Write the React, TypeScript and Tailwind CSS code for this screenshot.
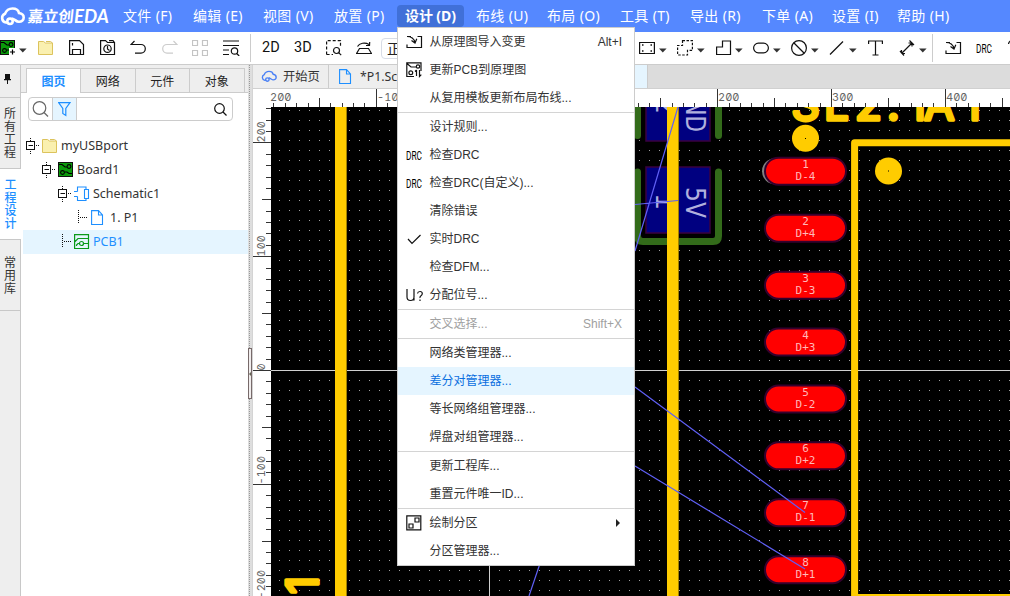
import React from "react";

const UI = "font-['Noto_Sans','Noto_Sans_CJK_SC',sans-serif]";
const MENU = "font-['Liberation_Sans','Noto_Sans_CJK_SC',sans-serif]";

const K = { fill: "none", stroke: "#111", strokeWidth: 1.2 } as const;

function Icon({ w = 16, h = 16, children, className = "" }: { w?: number; h?: number; children: React.ReactNode; className?: string }) {
  return (
    <svg width={w} height={h} viewBox={`0 0 ${w} ${h}`} className={`block shrink-0 ${className}`} {...K}>
      {children}
    </svg>
  );
}

function Caret() {
  return (
    <svg width="8" height="5" viewBox="0 0 8 5" className="mt-1 block shrink-0">
      <path d="M0 0.5h7.6L3.8 4.6z" fill="#333" />
    </svg>
  );
}

function DrcIcon() {
  return (
    <svg width="18" height="12" viewBox="0 0 18 12" className="block shrink-0">
      <text x="0" y="10.500" fontFamily="Roboto" fontSize="12" textLength="16" lengthAdjust="spacingAndGlyphs" fill="#000">DRC</text>
    </svg>
  );
}

const ImportIcon = () => (
  <Icon w={17} h={16}>
    <path d="M5 2.500H1M11.500 2.500H15.500V13.500H1V10.500M1 2.500C5 2.500 8 4.500 9 8.500M5.500 6.500L9 9l1.800-4.200" />
  </Icon>
);

const FolderIcon = ({ className = "" }: { className?: string }) => (
  <svg width="16" height="16" viewBox="0 0 16 16" className={`block shrink-0 ${className}`}>
    <path d="M0.500 1.500H5.500L7.500 3H14.500V14.500H0.500z" fill="#faf0b0" stroke="#dcc35c" />
    <path d="M8 1.500h4.500l2 1.500" fill="none" stroke="#dcc35c" />
  </svg>
);

const BoardIcon = ({ plus = false }: { plus?: boolean }) => (
  <svg width="16" height="16" viewBox="0 0 16 16" className="block shrink-0">
    <rect x="0.500" y="0.500" width="14" height="14" fill="#0a9a0a" stroke="#111" />
    <g fill="none" stroke="#000" strokeWidth="1.100">
      <path d="M1 2.500h3l3 2.500h2M14 11.500h-3l-2-1.500H6.500" />
      <circle cx="11" cy="4.500" r="1.900" />
      <circle cx="4.500" cy="10.500" r="1.900" />
    </g>
    {plus && <path d="M9 8h7v8H9z" fill="#fff" />}
    {plus && <path d="M12.500 9.500v5M10 12h5" stroke="#000" strokeWidth="1.200" />}
  </svg>
);

const PageIcon = ({ className = "" }: { className?: string }) => (
  <svg width="13" height="16" viewBox="0 0 13 16" className={`block shrink-0 ${className}`} fill="none" stroke="#1e8fff" strokeWidth="1.100">
    <path d="M0.600 0.600H7.500L11.500 5V14.500H0.600zM7.500 0.600V5h4" />
  </svg>
);

const CloudIcon = ({ w, h, color, sw }: { w: number; h: number; color: string; sw: number }) => (
  <svg width={w} height={h} viewBox="0 0 25 19" className="block shrink-0" fill="none" stroke={color} strokeWidth={sw}>
    <path d="M7.500 15.500H6A4.600 4.600 0 0 1 5 6.700C6.500 3 9.500 1.500 12.500 1.500c3.500 0 6 2 6.500 4.500 3 .5 4.700 2.300 4.700 4.500 0 3-2.200 4.500-5 4.300-2.700-.2-4-2.800-6.700-3.400" />
    <circle cx="10" cy="14.300" r="2.700" />
  </svg>
);

const topMenus: [string, string][] = [
  ["文件 (F)", "w-[70px]"],
  ["编辑 (E)", "w-[70px]"],
  ["视图 (V)", "w-[71px]"],
  ["放置 (P)", "w-[71px]"],
  ["设计 (D)", "w-[71px]"],
  ["布线 (U)", "w-[71px]"],
  ["布局 (O)", "w-[73px]"],
  ["工具 (T)", "w-[70px]"],
  ["导出 (R)", "w-[72px]"],
  ["下单 (A)", "w-[70px]"],
  ["设置 (I)", "w-[65px]"],
  ["帮助 (H)", "w-[70px]"],
];

function Header() {
  return (
    <header className="flex h-8 shrink-0 items-start bg-[#5588ff] text-white">
      <div className="flex h-8 w-[115px] shrink-0 items-center">
        <CloudIcon w={25} h={19} color="#fff" sw={2.6} />
        <svg width="86" height="22" viewBox="0 0 86 22" className="ml-[2px] block" fill="#fff">
          <text x="0" y="17" fontSize="15.500" fontWeight="700" fontFamily="'Noto Sans CJK SC'" textLength="46" transform="skewX(-6) translate(2 0)">嘉立创</text>
          <text x="47" y="17.500" fontSize="18" fontWeight="700" fontStyle="italic" fontFamily="Lato" textLength="35" lengthAdjust="spacingAndGlyphs">EDA</text>
        </svg>
      </div>
      {topMenus.map(([t, w], i) => (
        <div key={t} className={`${w} flex shrink-0`}>
          <span
            className={`mt-[5px] flex h-[22px] items-center rounded-sm px-2 pb-[2px] text-[14px] whitespace-nowrap ${UI} ${
              i === 4 ? "w-[67px] bg-[#4070d8] font-bold tracking-[-0.1px]" : "tracking-[0.35px]"
            }`}
          >
            {t}
          </span>
        </div>
      ))}
    </header>
  );
}

function Cell({ w, children }: { w: string; children: React.ReactNode }) {
  return <div className={`${w} flex h-full shrink-0 items-center`}>{children}</div>;
}

function Toolbar() {
  return (
    <div className="flex h-[33px] shrink-0 overflow-hidden border-b border-[#cccccc] bg-white">
      <Cell w="w-[38px]">
        <BoardIcon plus />
        <span className="ml-[3px]"><Caret /></span>
      </Cell>
      <Cell w="w-[31px]"><FolderIcon /></Cell>
      <Cell w="w-[31px]">
        <Icon><path d="M0.600 0.600H10.500L14.500 4.500V14.500H0.600zM3.500 3v2.500M3.500 14V9.500H11.500V14" /></Icon>
      </Cell>
      <Cell w="w-[30px]">
        <Icon><path d="M0.600 14.500V0.600H5.500L7.500 2.500H14.500V14.500zM9 0.700h4l1.500 2" /><circle cx="7.500" cy="8.700" r="3.700" /><path d="M7.500 6v3l2 1.500" /></Icon>
      </Cell>
      <Cell w="w-[31px]"><Icon w={17}><path d="M4.500 1L1 4.500H11a4.300 4.300 0 0 1 0 8.600H5" /></Icon></Cell>
      <Cell w="w-[31px]"><Icon w={17}><path d="M12.500 1L16 4.500H6a4.300 4.300 0 0 0 0 8.600h6" stroke="#ccc" /></Icon></Cell>
      <Cell w="w-[31px]">
        <Icon><path d="M0.500 0.500h5v5h-5zM10.500 0.500h5v5h-5zM0.500 10.500h5v5h-5zM10.500 10.500h5v5h-5z" stroke="#c4c4c4" /></Icon>
      </Cell>
      <Cell w="w-[27px]">
        <Icon w={17}><path d="M0 1H16M0 5.500H16M0 10H6M0 14.500H6M13.700 13.500l2.500 2.500" /><circle cx="11.500" cy="11" r="3.200" /></Icon>
      </Cell>
      <div className="mt-0.5 mr-[11px] h-7 w-px shrink-0 bg-[#cccccc]" />
      <Cell w="w-[32px]"><span className="font-['Roboto'] text-[14.500px] text-[#111]">2D</span></Cell>
      <Cell w="w-[32px]"><span className="font-['Roboto'] text-[14.500px] text-[#111]">3D</span></Cell>
      <Cell w="w-[30px]">
        <Icon><path d="M0.600 14.500V0.600H14.500V6M0.600 14.500H7" strokeDasharray="3 2" /><circle cx="10.500" cy="10.500" r="3" /><path d="M12.700 12.700l2.500 2.500" /></Icon>
      </Cell>
      <Cell w="w-[25px]">
        <Icon><path d="M3.500 8.500H12.500L15.500 13.500H0.600zM1.500 6.500C3.500 3 9 2 13 4.500M10 5.500l3.500 0 .2-3.500" /></Icon>
      </Cell>
      <Cell w="w-[258px]">
        <div className={`flex h-[21px] w-[60px] items-center rounded-sm border border-[#d8dce6] pl-[5px] text-[14px] text-[#222] ${UI}`}>正常</div>
      </Cell>
      <Cell w="w-[38px]">
        <Icon><path d="M0.600 2.500H15.400V13.500H0.600z" /><path d="M3 5h1.500M11.500 5H13M3 11h1.500M11.500 11H13" strokeWidth="1.500" /></Icon>
        <span className="ml-1"><Caret /></span>
      </Cell>
      <Cell w="w-[39px]">
        <Icon><path d="M5.500 0.600H15.400V10.400H10.500V15H0.600V5.500H5.500z" strokeDasharray="2.500 1.500" /></Icon>
        <span className="ml-1"><Caret /></span>
      </Cell>
      <Cell w="w-[37px]">
        <Icon><path d="M6.500 1H14.500V14.500H0.600V7H6.500z" /></Icon>
        <span className="ml-[3px]"><Caret /></span>
      </Cell>
      <Cell w="w-[38px]">
        <Icon><rect x="0.600" y="3.200" width="14.800" height="9.600" rx="4.800" /></Icon>
        <span className="ml-1"><Caret /></span>
      </Cell>
      <Cell w="w-[38px]">
        <Icon><circle cx="8" cy="8" r="7.400" /><path d="M3 3l10 10" /></Icon>
        <span className="ml-1"><Caret /></span>
      </Cell>
      <Cell w="w-[39px]">
        <Icon><path d="M1 14.500L14 1.500" /></Icon>
        <span className="ml-1"><Caret /></span>
      </Cell>
      <Cell w="w-[31px]"><Icon><path d="M0.600 4V1H14.400V4M7.500 1V15M4.500 15h6" /></Icon></Cell>
      <Cell w="w-[33px]">
        <Icon><path d="M2.500 13.500L13 3M1 11l4 4.500M10.500 0.500L15 5M2.500 13.500v-3.500M2.500 13.500h3.500M13 3H9.500M13 3v3.500" /></Icon>
        <span className="ml-1"><Caret /></span>
      </Cell>
      <div className="mt-0.5 mr-[12px] h-7 w-px shrink-0 bg-[#cccccc]" />
      <Cell w="w-[31px]"><ImportIcon /></Cell>
      <Cell w="w-[32px]"><DrcIcon /></Cell>
      <Cell w="w-[16px]"><Icon><path d="M0.500 4a4 4 0 0 1 4-3.500" /></Icon></Cell>
    </div>
  );
}

function SideTab({ text, h, active = false }: { text: string; h: string; active?: boolean }) {
  return (
    <div className={`${h} flex w-full shrink-0 flex-col items-center justify-center border-b border-[#c8c8c8] text-[12px] leading-[13px] ${UI} ${active ? "bg-white font-medium text-[#1e8fff]" : "border-r bg-[#eeeeee] text-[#333]"}`}>
      {[...text].map((c) => (
        <span key={c}>{c}</span>
      ))}
    </div>
  );
}

function Expander() {
  return (
    <svg width="14" height="16" viewBox="0 0 14 16" className="block shrink-0" fill="none" stroke="#111">
      <path d="M4.500 0v3M4.500 13v3M10 7.500h4" strokeDasharray="1 1" />
      <rect x="0.500" y="3.500" width="8" height="8" />
      <path d="M2.500 7.500h4.500" />
    </svg>
  );
}

function Branch() {
  return (
    <svg width="12" height="16" viewBox="0 0 12 16" className="block shrink-0" stroke="#111" strokeDasharray="1 1">
      <path d="M0.500 0v14M2 7.500h8" />
    </svg>
  );
}

function LeftPanel() {
  const row = `flex h-6 items-center text-[12.500px] ${UI}`;
  return (
    <div className="flex w-[253px] shrink-0">
      <div className="flex w-[21px] shrink-0 flex-col bg-[#eeeeee]">
        <div className="flex h-[33px] shrink-0 items-start justify-center border-r border-b border-[#c8c8c8] pt-[9px] pr-[6px]">
          <svg width="7" height="10" viewBox="0 0 7 10" fill="#111"><path d="M1 0h5v5h1v1.200H4V10H3V6.200H0V5h1z" /></svg>
        </div>
        <SideTab text="所有工程" h="h-[71px]" />
        <SideTab text="工程设计" h="h-[71px]" active />
        <SideTab text="常用库" h="h-[71px]" />
        <div className="flex-1 border-r border-[#c8c8c8]" />
      </div>
      <div className="flex w-[227px] shrink-0 flex-col bg-white">
        <div className={`flex h-7 shrink-0 items-end border-b border-[#cccccc] bg-[#eeeeee] pl-[5px] text-[12px] text-[#222] ${UI}`}>
          {["图页", "网络", "元件", "对象"].map((t, i) => (
            <div
              key={t}
              className={`flex items-center justify-center border-t border-r border-[#cccccc] pt-[2px] ${
                i === 0 ? "-mb-px h-[25px] w-[55px] border-l bg-white font-bold text-[#1e8fff]" : "h-6 w-[54.500px]"
              }`}
            >
              {t}
            </div>
          ))}
        </div>
        <div className="mt-1 ml-[7px] flex h-6 w-[205px] shrink-0 items-center rounded-sm border border-[#cccccc]">
          <div className="flex w-[23px] justify-center">
            <Icon w={17}><circle cx="7.500" cy="7" r="6.300" stroke="#666" /><path d="M12 11.500l4 4" stroke="#666" /></Icon>
          </div>
          <div className="flex h-full w-[25px] items-center justify-center border-x border-[#cccccc] bg-[#e5f5ff]">
            <Icon w={13} h={15}><path d="M0.600 0.600H12L7.800 6.500V13.500L4.800 11.500V6.500z" stroke="#1e8fff" /></Icon>
          </div>
          <div className="flex-1" />
          <Icon w={13} h={13} className="mr-[5px]"><circle cx="5.500" cy="5.500" r="4.800" /><path d="M9 9l3.500 3.500" /></Icon>
        </div>
        <div className="mt-[13px] flex flex-col">
          <div className={`${row} pl-[5px] text-[#333]`}><Expander /><FolderIcon className="ml-[2px]" /><span className="mt-px ml-[3px]">myUSBport</span></div>
          <div className={`${row} pl-[21px] text-[#333]`}><Expander /><span className="ml-[2px]"><BoardIcon /></span><span className="mt-px ml-[3px]">Board1</span></div>
          <div className={`${row} pl-[37px] text-[#333]`}>
            <Expander />
            <svg width="16" height="16" viewBox="0 0 16 16" fill="none" stroke="#1e8fff" className="ml-[2px] block" strokeWidth="1.100">
              <path d="M3.500 5.500V1H12V3.500M3.500 10.500V14.500H12V12.500M0 5.500h3.500M0 10.500h3.500M10.500 3.500h4v9h-4z" />
            </svg>
            <span className="mt-px ml-[3px]">Schematic1</span>
          </div>
          <div className={`${row} pl-[57px] text-[#333]`}><Branch /><PageIcon className="ml-[1px]" /><span className="mt-px ml-[6px]">1. P1</span></div>
          <div className={`${row} ml-[2px] bg-[#e5f5ff] pl-[39px] text-[#1e8fff]`}>
            <Branch />
            <svg width="16" height="16" viewBox="0 0 16 16" fill="none" stroke="#0a9a1a" className="block" strokeWidth="1.200">
              <path d="M0.600 0.600H14.500V14.500H0.600zM0.600 8L4 4.500H14.500M9.500 9.500h5M2.500 12v-1L4 9.500h2" />
              <circle cx="7.500" cy="9.500" r="2" />
            </svg>
            <span className="mt-px ml-[3px]">PCB1</span>
          </div>
        </div>
      </div>
      <div className="flex w-[5px] flex-col border-r border-[#d4d4d4] bg-[#dedede]">
        <div className="ml-px h-[283px] w-0 border-l border-dotted border-[#999]" />
        <div className="flex h-[51px] items-center border border-[#776a6a] bg-[#f1eded]">
          <svg width="3" height="6" viewBox="0 0 3 6" fill="#665"><path d="M3 0v6L0 3z" /></svg>
        </div>
        <div className="ml-px w-0 flex-1 border-l border-dotted border-[#999]" />
      </div>
    </div>
  );
}

const RULER_STYLE = { fontFeatureSettings: '"zero","tnum"' };

function Ruler({ vertical = false }: { vertical?: boolean }) {
  const origin = vertical ? 370 : 489.6;
  const ticks: React.ReactNode[] = [];
  const from = vertical ? -20 : -20;
  const to = vertical ? 23 : 45;
  for (let i = from; i <= to; i++) {
    const p = Math.round(origin + (vertical ? -1 : 1) * i * 11.38) + 0.5;
    const len = i % 10 === 0 ? 18 : i % 5 === 0 ? 9 : 4;
    ticks.push(
      vertical ? <path key={i} d={`M${271 - (len === 4 ? 5 : len)} ${p}H271`} /> : <path key={i} d={`M${p} ${107 - len}V107`} />
    );
    const covered = !vertical && (i === 0 || i === 10);
    if (i % 10 === 0 && !covered) {
      const clippedStart = !vertical && i === -20;
      ticks.push(
        <text
          key={`t${i}`}
          x={vertical ? 0 : clippedStart ? 270 : p + 0.5}
          y={vertical ? 0 : 101}
          transform={vertical ? `translate(265 ${p}) rotate(-90)` : undefined}
          stroke="none"
          fill="#666"
          fontFamily="Inter"
          fontSize="11"
          style={RULER_STYLE}
        >
          {clippedStart ? "200" : String(i * 10)}
        </text>
      );
    }
  }
  return vertical ? (
    <svg width="18" height="489" viewBox="253 107 18 489" className="block shrink-0 bg-white" stroke="#333">{ticks}</svg>
  ) : (
    <svg width="740" height="18" viewBox="270 89 740 18" className="block shrink-0 bg-white" stroke="#333">{ticks}</svg>
  );
}

const pads: [string, string, number][] = [
  ["1", "D-4", 171.2], ["2", "D+4", 228.2], ["3", "D-3", 285.2], ["4", "D+3", 342],
  ["5", "D-2", 399], ["6", "D+2", 455.8], ["7", "D-1", 512.7], ["8", "D+1", 569.7],
];

function Board() {
  return (
    <svg width="739" height="489" viewBox="271 107 739 489" className="block shrink-0 bg-black">
      <defs>
        <pattern id="dots" x="279" y="110" width="10" height="10" patternUnits="userSpaceOnUse">
          <rect width="1" height="1" fill="#a0a0a0" />
        </pattern>
      </defs>
      <rect x="271" y="107" width="739" height="489" fill="url(#dots)" />
      <path d="M271 370.500H1010M489.500 107V596" stroke="#d0d0d0" />
      <g fill="none" stroke="#336b1a" strokeWidth="7" strokeLinecap="round">
        <path d="M637.500 100V135.500M718.500 100V135.500M637.500 172V236q0 5.500 5.500 5.500H713q5.500 0 5.500-5.500V172" />
      </g>
      <g fill="#000080" stroke="#3a0040" strokeWidth="1.500">
        <rect x="646" y="80" width="64" height="61" />
        <rect x="646" y="167" width="64" height="66" />
      </g>
      <g fill="#b0b0dd" fontFamily="'DejaVu Sans'" fontSize="27">
        <text transform="translate(686 187) rotate(90)" textLength="31" lengthAdjust="spacingAndGlyphs">5V</text>
        <text transform="translate(686 83) rotate(90)" textLength="49" lengthAdjust="spacingAndGlyphs">GND</text>
        <text transform="translate(656 193) rotate(90)">1</text>
        <text transform="translate(656 97) rotate(90)">2</text>
      </g>
      <g fill="#ffcc00">
        <rect x="335" y="107" width="12" height="489" />
        <rect x="667" y="107" width="12" height="489" />
      </g>
      <path d="M346.500 107V596M678.500 107V596" stroke="#a08000" />
      <path d="M1010 142.800H854.600V596M854 597.500H1010" fill="none" stroke="#ffcc00" strokeWidth="7" strokeLinejoin="round" />
      <g fill="#ffcc00" stroke="#ffcc00" strokeWidth="3.500" strokeLinejoin="round" fontFamily="Inter" fontSize="44">
        <text y="120" x="791.500 824 855 887 908 924 963">SL2.1A1</text>
        <text transform="translate(318 594) rotate(-90)">1</text>
        <text transform="translate(318 624) rotate(-90)">B</text>
      </g>
      <circle cx="805.500" cy="138.300" r="13.500" fill="#ffcc00" />
      <circle cx="888.500" cy="171" r="13.500" fill="#ffcc00" />
      <path d="M805 138h1v1h-1zM888 170.500h1v1h-1z" fill="#000" />
      <rect x="762" y="158.200" width="60" height="26" rx="13" fill="#808080" />
      {pads.map(([n, name, cy]) => (
        <g key={n}>
          <rect x="765" y={cy - 13.5} width="81" height="27" rx="13.500" fill="#ff0000" stroke="#35002e" strokeWidth="2" />
          <g fill="#ffb8b8" fontFamily="'DejaVu Sans Mono'" fontSize="11" textAnchor="middle">
            <text x="805.500" y={cy - 3.5}>{n}</text>
            <text x="805.500" y={cy + 8.6}>{name}</text>
          </g>
        </g>
      ))}
      <path d="M678 107L635 251M635 204.500L678 200.500M635 387L805 512.500M635 466L805 569M539.500 565L529 596" fill="none" stroke="#5f5ff5" strokeWidth="1.200" />
    </svg>
  );
}

function Editor() {
  return (
    <div className="flex w-[757px] flex-col">
      <div className={`flex h-6 shrink-0 items-center border-b border-[#d0d0d0] bg-[#dcdcdc] text-[12.300px] text-[#333] ${UI}`}>
        <div className="flex h-full w-[76px] items-center border-r border-[#cccccc] bg-[#eeeeee] pl-2">
          <CloudIcon w={16} h={13} color="#4a80f5" sw={2.2} />
          <span className="mt-px ml-1.5 whitespace-nowrap">开始页</span>
        </div>
        <div className="flex h-full w-[160px] items-center border-r border-[#cccccc] bg-[#eeeeee] pl-[10px]">
          <PageIcon />
          <span className="mt-px ml-2 whitespace-nowrap">*P1.Schematic1</span>
        </div>
        <div className="h-full w-[159px] border-r border-[#cccccc] bg-[#e5f5ff]" />
      </div>
      <div className="flex h-[18px] shrink-0">
        <div className="w-[17px] shrink-0 bg-white" />
        <Ruler />
      </div>
      <div className="flex">
        <Ruler vertical />
        <Board />
      </div>
    </div>
  );
}

const CheckIcon = () => <Icon><path d="M2 8l4 4.500L14.500 4" /></Icon>;
const UpdateIcon = () => (
  <Icon>
    <path d="M8 14.500H0.800V0.800H15V9M1 1.500l4 3.500h5M10.500 8v6M9 9.500L10.500 8M13.500 8v6.500l1.800-1.800" />
    <circle cx="12" cy="4.500" r="1.700" /><circle cx="4.800" cy="10.800" r="1.900" />
  </Icon>
);
const ZoneIcon = () => <Icon><path d="M0.800 0.800h14v14h-14zM3 9h4v4H3zM9 3h4v4H9z" /></Icon>;
const UnitIcon = () => (
  <svg width="18" height="16" viewBox="0 0 18 16" fill="none" stroke="#111" strokeWidth="1.200">
    <path d="M1 2V10q0 3.500 3.500 3.500T8 10V2M8 13.500V11M11.500 6.500q.3-2 2.500-2t2.300 2q0 1.500-1.300 2.300T14 11M14 12.500V14" />
  </svg>
);

type Item = { t: string; k?: string; icon?: React.ReactNode; off?: boolean; on?: boolean; sub?: boolean };
const groups: Item[][] = [
  [{ t: "从原理图导入变更", k: "Alt+I", icon: <ImportIcon /> }, { t: "更新PCB到原理图", icon: <UpdateIcon /> }, { t: "从复用模板更新布局布线..." }],
  [
    { t: "设计规则..." }, { t: "检查DRC", icon: <DrcIcon /> }, { t: "检查DRC(自定义)...", icon: <DrcIcon /> }, { t: "清除错误" },
    { t: "实时DRC", icon: <CheckIcon /> }, { t: "检查DFM..." }, { t: "分配位号...", icon: <UnitIcon /> },
  ],
  [{ t: "交叉选择...", k: "Shift+X", off: true }],
  [{ t: "网络类管理器..." }, { t: "差分对管理器...", on: true }, { t: "等长网络组管理器..." }, { t: "焊盘对组管理器..." }],
  [{ t: "更新工程库..." }, { t: "重置元件唯一ID..." }],
  [{ t: "绘制分区", icon: <ZoneIcon />, sub: true }, { t: "分区管理器..." }],
];

function DesignMenu() {
  return (
    <div className={`absolute top-[27px] left-[397px] w-[238px] border border-[#cccccc] bg-white text-[12px] ${MENU}`}>
      {groups.map((g, gi) => (
        <div key={gi} className={gi > 0 ? "border-t border-[#d4d4d4]" : ""}>
          {g.map((it) => (
            <div
              key={it.t}
              className={`flex h-7 items-center pr-3 ${it.on ? "bg-[#e5f5ff] text-[#0a6fe0]" : it.off ? "text-[#a0a0a0]" : "text-[#333]"}`}
            >
              <div className="flex w-[31.500px] shrink-0 justify-start pl-2">{it.icon}</div>
              <span className="flex-1 whitespace-nowrap">{it.t}</span>
              {it.k && <span>{it.k}</span>}
              {it.sub && <svg width="4" height="8" viewBox="0 0 4 8" className="mr-[2px]"><path d="M0 0l4 4-4 4z" fill="#222" /></svg>}
            </div>
          ))}
        </div>
      ))}
    </div>
  );
}

export default function App() {
  return (
    <div className="relative flex h-[596px] w-[1010px] flex-col overflow-hidden bg-white">
      <Header />
      <Toolbar />
      <div className="flex min-h-0 flex-1">
        <LeftPanel />
        <Editor />
      </div>
      <DesignMenu />
    </div>
  );
}
